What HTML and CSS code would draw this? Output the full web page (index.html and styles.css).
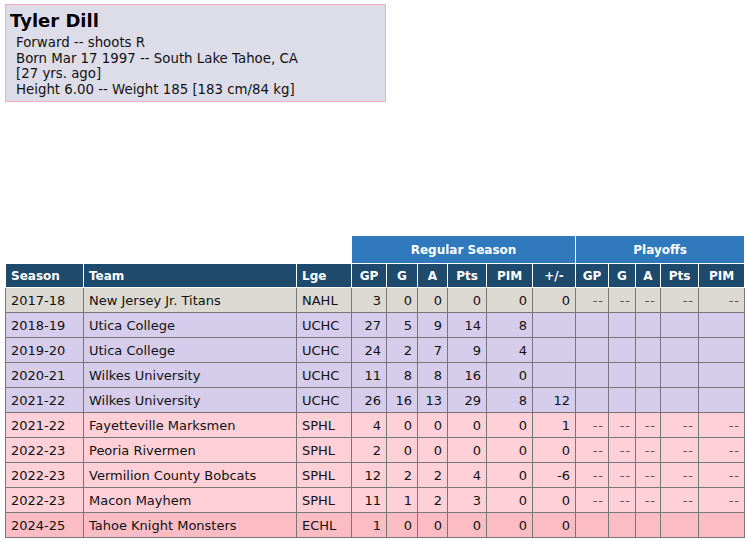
FILE: index.html
```html
<!DOCTYPE html>
<html>
<head>
<meta charset="utf-8">
<link rel="stylesheet" href="styles.css">
</head>
<body>
<div class="card">
  <div class="name">Tyler Dill</div>
  <div class="info">
    <div>Forward -- shoots R</div>
    <div>Born Mar 17 1997 -- South Lake Tahoe, CA</div>
    <div>[27 yrs. ago]</div>
    <div>Height 6.00 -- Weight 185 [183 cm/84 kg]</div>
  </div>
</div>
<table class="stats">
  <colgroup>
    <col style="width:78px"><col style="width:213px"><col style="width:55px">
    <col style="width:35px"><col style="width:31px"><col style="width:30px"><col style="width:39px"><col style="width:46px"><col style="width:43px">
    <col style="width:33px"><col style="width:27px"><col style="width:25px"><col style="width:38px"><col style="width:46px">
  </colgroup>
  <thead>
    <tr class="group">
      <th colspan="3" class="blank"></th>
      <th colspan="6">Regular Season</th>
      <th colspan="5">Playoffs</th>
    </tr>
    <tr class="cols">
      <th class="l">Season</th><th class="l">Team</th><th class="l">Lge</th>
      <th>GP</th><th>G</th><th>A</th><th>Pts</th><th>PIM</th><th>+/-</th>
      <th>GP</th><th>G</th><th>A</th><th>Pts</th><th>PIM</th>
    </tr>
  </thead>
  <tbody>
    <tr class="gray"><td class="l">2017-18</td><td class="l">New Jersey Jr. Titans</td><td class="l">NAHL</td><td>3</td><td>0</td><td>0</td><td>0</td><td>0</td><td>0</td><td class="d">--</td><td class="d">--</td><td class="d">--</td><td class="d">--</td><td class="d">--</td></tr>
    <tr class="lav"><td class="l">2018-19</td><td class="l">Utica College</td><td class="l">UCHC</td><td>27</td><td>5</td><td>9</td><td>14</td><td>8</td><td></td><td></td><td></td><td></td><td></td><td></td></tr>
    <tr class="lav"><td class="l">2019-20</td><td class="l">Utica College</td><td class="l">UCHC</td><td>24</td><td>2</td><td>7</td><td>9</td><td>4</td><td></td><td></td><td></td><td></td><td></td><td></td></tr>
    <tr class="lav"><td class="l">2020-21</td><td class="l">Wilkes University</td><td class="l">UCHC</td><td>11</td><td>8</td><td>8</td><td>16</td><td>0</td><td></td><td></td><td></td><td></td><td></td><td></td></tr>
    <tr class="lav"><td class="l">2021-22</td><td class="l">Wilkes University</td><td class="l">UCHC</td><td>26</td><td>16</td><td>13</td><td>29</td><td>8</td><td>12</td><td></td><td></td><td></td><td></td><td></td></tr>
    <tr class="pink"><td class="l">2021-22</td><td class="l">Fayetteville Marksmen</td><td class="l">SPHL</td><td>4</td><td>0</td><td>0</td><td>0</td><td>0</td><td>1</td><td class="d">--</td><td class="d">--</td><td class="d">--</td><td class="d">--</td><td class="d">--</td></tr>
    <tr class="pink"><td class="l">2022-23</td><td class="l">Peoria Rivermen</td><td class="l">SPHL</td><td>2</td><td>0</td><td>0</td><td>0</td><td>0</td><td>0</td><td class="d">--</td><td class="d">--</td><td class="d">--</td><td class="d">--</td><td class="d">--</td></tr>
    <tr class="pink"><td class="l">2022-23</td><td class="l">Vermilion County Bobcats</td><td class="l">SPHL</td><td>12</td><td>2</td><td>2</td><td>4</td><td>0</td><td>-6</td><td class="d">--</td><td class="d">--</td><td class="d">--</td><td class="d">--</td><td class="d">--</td></tr>
    <tr class="pink"><td class="l">2022-23</td><td class="l">Macon Mayhem</td><td class="l">SPHL</td><td>11</td><td>1</td><td>2</td><td>3</td><td>0</td><td>0</td><td class="d">--</td><td class="d">--</td><td class="d">--</td><td class="d">--</td><td class="d">--</td></tr>
    <tr class="rose"><td class="l">2024-25</td><td class="l">Tahoe Knight Monsters</td><td class="l">ECHL</td><td>1</td><td>0</td><td>0</td><td>0</td><td>0</td><td>0</td><td></td><td></td><td></td><td></td><td></td></tr>
  </tbody>
</table>
</body>
</html>
```
FILE: styles.css
```css
html, body {
  margin: 0;
  padding: 0;
  background: #ffffff;
}
body {
  padding: 4px 5px;
  font-family: "DejaVu Sans", Verdana, sans-serif;
  font-size: 13px;
  color: #111;
}
.card {
  width: 379px;
  height: 96px;
  box-sizing: content-box;
  background: #dddde9;
  border: 1px solid #f5abc2;
  padding: 0;
  margin-bottom: 133px;
}
.name {
  font-size: 18px;
  font-weight: bold;
  padding: 5px 0 0 4px;
  line-height: 22px;
  color: #000;
}
.info {
  padding: 3px 0 0 10px;
  font-size: 13.33px;
  line-height: 15.5px;
  color: #111;
}
.stats {
  border-collapse: collapse;
  table-layout: fixed;
  width: 739px;
}
.stats th {
  font-size: 12px;
  font-weight: bold;
  color: #fff;
  border: 1px solid #fff;
  padding: 0 5px;
  text-align: center;
  white-space: nowrap;
}
.stats .group th {
  background: #3179bd;
  height: 27px;
}
.stats .group th.blank {
  background: transparent;
  border: none;
}
.stats .cols th {
  background: #1e4a6d;
  height: 23px;
}
.stats th.l {
  text-align: left;
}
.stats td {
  border: 1px solid #777;
  height: 24px;
  padding: 0 5px;
  text-align: right;
  white-space: nowrap;
  color: #111;
}
.stats td.l {
  text-align: left;
}
.stats td.d {
  color: #555;
  letter-spacing: 1px;
  padding-right: 4px;
}
.gray td { background: #dcd8d2; }
.lav td { background: #d6cdec; }
.pink td { background: #ffd0d7; }
.rose td { background: #fbbcc4; }
```
